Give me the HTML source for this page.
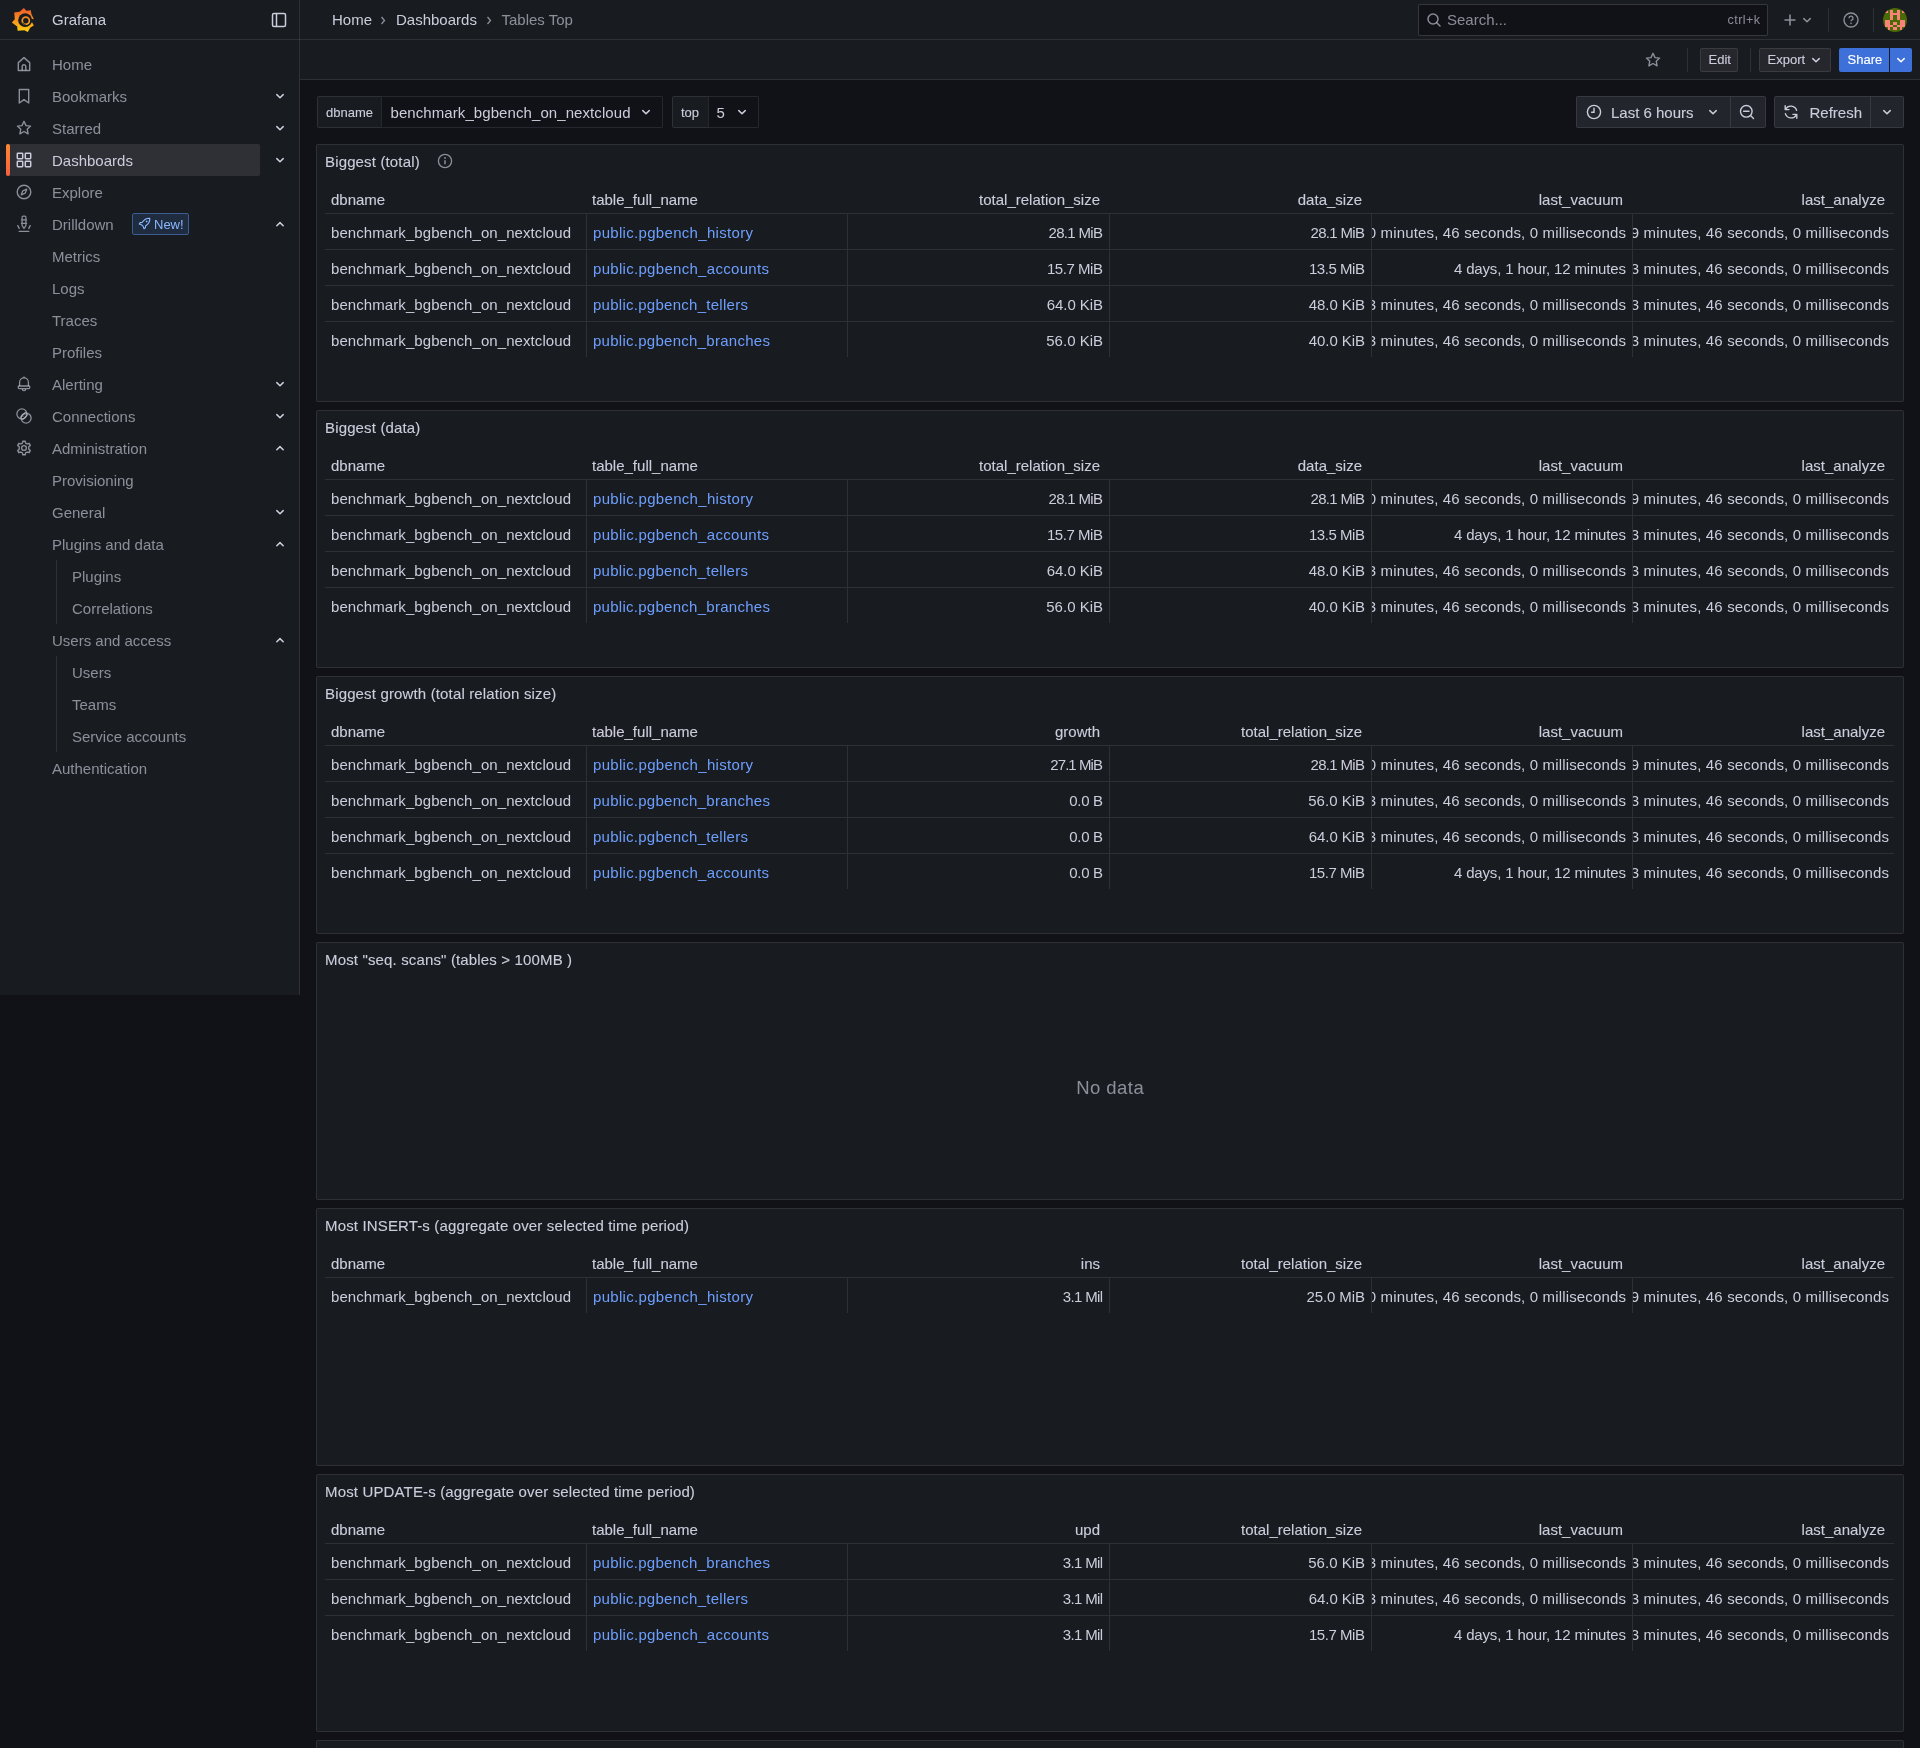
<!DOCTYPE html><html><head><meta charset="utf-8"><style>
*{box-sizing:border-box}
html,body{margin:0;padding:0}
body{will-change:transform;width:1920px;height:1748px;background:#111217;font-family:"Liberation Sans",sans-serif;color:#ccccdc;position:relative;overflow:hidden;font-size:15px}
.a{position:absolute}
.t{position:absolute;white-space:nowrap;line-height:1}
svg.a{overflow:visible}
</style></head><body>

<div class="a" style="left:0px;top:0px;width:1920px;height:40px;background:#181b1f;border-bottom:1px solid rgba(204,204,220,0.12)"></div>
<div class="a" style="left:0px;top:40px;width:300px;height:955px;background:#181b1f"></div>
<div class="a" style="left:299px;top:0px;width:1px;height:995px;background:rgba(204,204,220,0.12)"></div>
<div class="a" style="left:300px;top:40px;width:1620px;height:40px;background:#181b1f;border-bottom:1px solid rgba(204,204,220,0.12)"></div>
<svg class="a" style="left:8px;top:4px" width="32" height="32" viewBox="0 0 32 32">
<defs><linearGradient id="lg" gradientUnits="userSpaceOnUse" x1="0" y1="28" x2="0" y2="4"><stop offset="0" stop-color="#fcd20b"/><stop offset="0.45" stop-color="#f8971c"/><stop offset="1" stop-color="#f05a28"/></linearGradient></defs>
<path fill="url(#lg)" d="M15.9 3.9 L18.3 6.8 L22.8 6.2 L23.4 10 L25.9 15.2 L23.6 17.2 L25.8 21.4 L22.4 23.6 L19.8 27.9 L16.3 26.2 L9.6 26.8 L9.2 22.6 L3.8 18.6 L6.8 15.2 L6.2 8.6 L11.6 7.8 Z"/>
<circle cx="17.1" cy="16.2" r="6.9" fill="#181b1f"/>
<circle cx="17.8" cy="16.7" r="3.55" fill="none" stroke="url(#lg)" stroke-width="1.7"/>
<path d="M14.4 18.6 Q15.5 20.6 17.6 20.4" fill="none" stroke="#181b1f" stroke-width="0.9"/><path d="M22.6 14.6 L26.4 15.6 L25.6 18 L22.8 18.4 Z" fill="#181b1f"/>
</svg>
<div class="t" style="left:52px;top:12.30px;font-size:15px;color:#ccccdc;">Grafana</div>
<svg class="a" style="left:271px;top:12px;" width="16" height="16" viewBox="0 0 16 16"><rect x="1.5" y="1.5" width="13" height="13" rx="1.5" fill="none" stroke="#ccccdc" stroke-width="1.5"/><line x1="5.5" y1="2" x2="5.5" y2="14" stroke="#ccccdc" stroke-width="1.5"/></svg>
<div class="t" style="left:332px;top:12.30px;font-size:15px;color:#ccccdc;">Home</div>
<svg class="a" style="left:380px;top:16px;" width="6" height="9" viewBox="0 0 6 9"><path d="M1.5 1 L4.5 4.5 L1.5 8" fill="none" stroke="rgba(204,204,220,0.65)" stroke-width="1.3"/></svg>
<div class="t" style="left:396px;top:12.30px;font-size:15px;color:#ccccdc;">Dashboards</div>
<svg class="a" style="left:486px;top:16px;" width="6" height="9" viewBox="0 0 6 9"><path d="M1.5 1 L4.5 4.5 L1.5 8" fill="none" stroke="rgba(204,204,220,0.65)" stroke-width="1.3"/></svg>
<div class="t" style="left:501.5px;top:12.30px;font-size:15px;color:rgba(204,204,220,0.65);">Tables Top</div>
<div class="a" style="left:1418px;top:4px;width:350px;height:32px;background:#111217;border:1px solid rgba(204,204,220,0.2);border-radius:2px"></div>
<svg class="a" style="left:1426px;top:12px;" width="16" height="16" viewBox="0 0 16 16"><circle cx="7" cy="7" r="5" fill="none" stroke="rgba(204,204,220,0.65)" stroke-width="1.5"/><line x1="10.8" y1="10.8" x2="14" y2="14" stroke="rgba(204,204,220,0.65)" stroke-width="1.5" stroke-linecap="round"/></svg>
<div class="t" style="left:1447px;top:12.30px;font-size:15px;color:rgba(204,204,220,0.65);">Search...</div>
<div class="t" style="right:160px;top:14.42px;font-size:12.5px;color:rgba(204,204,220,0.65);letter-spacing:0.45px;margin-right:-0.45px;">ctrl+k</div>
<svg class="a" style="left:1784px;top:14px;" width="12" height="12" viewBox="0 0 12 12"><path d="M6 0.5 V11.5 M0.5 6 H11.5" stroke="rgba(204,204,220,0.65)" stroke-width="1.6"/></svg>
<svg class="a" style="left:1802px;top:16.75px;" width="10" height="6.5" viewBox="0 0 10 6.5"><path d="M1.8 1.6 L5 4.8 L8.2 1.6" fill="none" stroke="rgba(204,204,220,0.65)" stroke-width="1.5" stroke-linecap="round" stroke-linejoin="round"/></svg>
<div class="a" style="left:1828px;top:8px;width:1px;height:24px;background:rgba(204,204,220,0.12)"></div>
<svg class="a" style="left:1843px;top:12px;" width="16" height="16" viewBox="0 0 16 16"><circle cx="8" cy="8" r="7" fill="none" stroke="rgba(204,204,220,0.65)" stroke-width="1.4"/><path d="M6 6.2 a2 2 0 1 1 2.6 1.9 c-0.5 0.2 -0.6 0.5 -0.6 1.2" fill="none" stroke="rgba(204,204,220,0.65)" stroke-width="1.3"/><circle cx="8" cy="11.4" r="0.8" fill="rgba(204,204,220,0.65)"/></svg>
<div class="a" style="left:1873px;top:8px;width:1px;height:24px;background:rgba(204,204,220,0.12)"></div>
<svg class="a" style="left:1883px;top:8px" width="24" height="24" viewBox="0 0 24 24"><defs><clipPath id="av"><circle cx="12" cy="12" r="12"/></clipPath></defs>
<g clip-path="url(#av)"><rect width="24" height="24" fill="#4a6a08"/><g fill="#fa8379" shape-rendering="crispEdges"><rect x="2.4" y="2.4" width="2.4" height="2.4"/><rect x="7.2" y="2.4" width="2.4" height="2.4"/><rect x="14.4" y="2.4" width="2.4" height="2.4"/><rect x="19.2" y="2.4" width="2.4" height="2.4"/><rect x="7.2" y="4.8" width="2.4" height="2.4"/><rect x="9.6" y="4.8" width="2.4" height="2.4"/><rect x="12.0" y="4.8" width="2.4" height="2.4"/><rect x="14.4" y="4.8" width="2.4" height="2.4"/><rect x="7.2" y="7.2" width="2.4" height="2.4"/><rect x="14.4" y="7.2" width="2.4" height="2.4"/><rect x="7.2" y="9.6" width="2.4" height="2.4"/><rect x="14.4" y="9.6" width="2.4" height="2.4"/><rect x="2.4" y="12.0" width="2.4" height="2.4"/><rect x="4.8" y="12.0" width="2.4" height="2.4"/><rect x="16.8" y="12.0" width="2.4" height="2.4"/><rect x="19.2" y="12.0" width="2.4" height="2.4"/><rect x="2.4" y="14.4" width="2.4" height="2.4"/><rect x="4.8" y="14.4" width="2.4" height="2.4"/><rect x="9.6" y="14.4" width="2.4" height="2.4"/><rect x="12.0" y="14.4" width="2.4" height="2.4"/><rect x="16.8" y="14.4" width="2.4" height="2.4"/><rect x="19.2" y="14.4" width="2.4" height="2.4"/><rect x="2.4" y="16.8" width="2.4" height="2.4"/><rect x="4.8" y="16.8" width="2.4" height="2.4"/><rect x="7.2" y="16.8" width="2.4" height="2.4"/><rect x="14.4" y="16.8" width="2.4" height="2.4"/><rect x="16.8" y="16.8" width="2.4" height="2.4"/><rect x="19.2" y="16.8" width="2.4" height="2.4"/><rect x="4.8" y="19.2" width="2.4" height="2.4"/><rect x="9.6" y="19.2" width="2.4" height="2.4"/><rect x="12.0" y="19.2" width="2.4" height="2.4"/><rect x="16.8" y="19.2" width="2.4" height="2.4"/></g></g></svg>
<svg class="a" style="left:1645px;top:52px;" width="16" height="16" viewBox="0 0 16 16"><path d="M8 1.3 L10 5.6 L14.6 6.1 L11.2 9.2 L12.1 13.8 L8 11.5 L3.9 13.8 L4.8 9.2 L1.4 6.1 L6 5.6 Z" fill="none" stroke="rgba(204,204,220,0.65)" stroke-width="1.4" stroke-linejoin="round"/></svg>
<div class="a" style="left:1687px;top:48px;width:1px;height:24px;background:rgba(204,204,220,0.12)"></div>
<div class="a" style="left:1700px;top:48px;width:38px;height:24px;background:#25272c;border:1px solid rgba(204,204,220,0.12);border-radius:2px"></div>
<div class="t" style="left:1708.5px;top:52.50px;font-size:13px;color:#ccccdc;-webkit-text-stroke:0.12px currentColor;">Edit</div>
<div class="a" style="left:1750px;top:48px;width:1px;height:24px;background:rgba(204,204,220,0.12)"></div>
<div class="a" style="left:1759px;top:48px;width:72px;height:24px;background:#25272c;border:1px solid rgba(204,204,220,0.12);border-radius:2px"></div>
<div class="t" style="left:1767.5px;top:52.50px;font-size:13px;color:#ccccdc;-webkit-text-stroke:0.12px currentColor;">Export</div>
<svg class="a" style="left:1811px;top:56.75px;" width="10" height="6.5" viewBox="0 0 10 6.5"><path d="M1.8 1.6 L5 4.8 L8.2 1.6" fill="none" stroke="#ccccdc" stroke-width="1.5" stroke-linecap="round" stroke-linejoin="round"/></svg>
<div class="a" style="left:1839px;top:48px;width:50px;height:24px;background:#3d71d9;border-radius:2px 0 0 2px"></div>
<div class="t" style="left:1847.5px;top:52.50px;font-size:13px;color:#ffffff;-webkit-text-stroke:0.12px currentColor;">Share</div>
<div class="a" style="left:1890px;top:48px;width:22px;height:24px;background:#3d71d9;border-radius:0 2px 2px 0"></div>
<svg class="a" style="left:1896px;top:56.75px;" width="10" height="6.5" viewBox="0 0 10 6.5"><path d="M1.8 1.6 L5 4.8 L8.2 1.6" fill="none" stroke="#ffffff" stroke-width="1.5" stroke-linecap="round" stroke-linejoin="round"/></svg>
<div class="a" style="left:317px;top:96px;width:65px;height:32px;background:#181b1f;border:1px solid rgba(204,204,220,0.12);border-radius:2px 0 0 2px"></div>
<div class="t" style="left:326px;top:106.00px;font-size:13px;color:#ccccdc;-webkit-text-stroke:0.12px currentColor;">dbname</div>
<div class="a" style="left:381px;top:96px;width:282px;height:32px;background:#111217;border:1px solid rgba(204,204,220,0.12);border-radius:0 2px 2px 0"></div>
<div class="t" style="left:390.5px;top:104.80px;font-size:15px;color:#ccccdc;letter-spacing:0.08px;">benchmark_bgbench_on_nextcloud</div>
<svg class="a" style="left:641px;top:108.75px;" width="10" height="6.5" viewBox="0 0 10 6.5"><path d="M1.8 1.6 L5 4.8 L8.2 1.6" fill="none" stroke="#ccccdc" stroke-width="1.5" stroke-linecap="round" stroke-linejoin="round"/></svg>
<div class="a" style="left:672px;top:96px;width:37px;height:32px;background:#181b1f;border:1px solid rgba(204,204,220,0.12);border-radius:2px 0 0 2px"></div>
<div class="t" style="left:681px;top:106.00px;font-size:13px;color:#ccccdc;-webkit-text-stroke:0.12px currentColor;">top</div>
<div class="a" style="left:708px;top:96px;width:51px;height:32px;background:#111217;border:1px solid rgba(204,204,220,0.12);border-radius:0 2px 2px 0"></div>
<div class="t" style="left:716.5px;top:104.80px;font-size:15px;color:#ccccdc;">5</div>
<svg class="a" style="left:737px;top:108.75px;" width="10" height="6.5" viewBox="0 0 10 6.5"><path d="M1.8 1.6 L5 4.8 L8.2 1.6" fill="none" stroke="#ccccdc" stroke-width="1.5" stroke-linecap="round" stroke-linejoin="round"/></svg>
<div class="a" style="left:1576px;top:96px;width:155px;height:32px;background:#22252b;border:1px solid rgba(204,204,220,0.12);border-radius:2px 0 0 2px"></div>
<svg class="a" style="left:1586px;top:104px;" width="16" height="16" viewBox="0 0 16 16"><circle cx="8" cy="8" r="6.6" fill="none" stroke="#ccccdc" stroke-width="1.4"/><path d="M8 4.3 V8.2 H5.6" fill="none" stroke="#ccccdc" stroke-width="1.4" stroke-linecap="round"/></svg>
<div class="t" style="left:1611px;top:104.80px;font-size:15px;color:#ccccdc;-webkit-text-stroke:0.12px currentColor;">Last 6 hours</div>
<svg class="a" style="left:1708px;top:108.75px;" width="10" height="6.5" viewBox="0 0 10 6.5"><path d="M1.8 1.6 L5 4.8 L8.2 1.6" fill="none" stroke="#ccccdc" stroke-width="1.5" stroke-linecap="round" stroke-linejoin="round"/></svg>
<div class="a" style="left:1730px;top:96px;width:36px;height:32px;background:#22252b;border:1px solid rgba(204,204,220,0.12);border-radius:0 2px 2px 0"></div>
<svg class="a" style="left:1739px;top:104px;" width="16" height="16" viewBox="0 0 16 16"><circle cx="7.3" cy="7.3" r="5.8" fill="none" stroke="#ccccdc" stroke-width="1.4"/><path d="M4.6 7.3 H10 M11.5 11.5 L14.5 14.5" stroke="#ccccdc" stroke-width="1.4" stroke-linecap="round"/></svg>
<div class="a" style="left:1774px;top:96px;width:97px;height:32px;background:#22252b;border:1px solid rgba(204,204,220,0.12);border-radius:2px 0 0 2px"></div>
<svg class="a" style="left:1783px;top:104px;" width="16" height="16" viewBox="0 0 16 16"><path d="M13.6 6.4 A6 6 0 0 0 2.6 5.2 M2.4 9.6 A6 6 0 0 0 13.4 10.8" fill="none" stroke="#ccccdc" stroke-width="1.4" stroke-linecap="round"/><path d="M2.2 1.8 V5.6 H6 M13.8 14.2 V10.4 H10" fill="none" stroke="#ccccdc" stroke-width="1.4" stroke-linecap="round" stroke-linejoin="round"/></svg>
<div class="t" style="left:1809.5px;top:104.80px;font-size:15px;color:#ccccdc;-webkit-text-stroke:0.12px currentColor;">Refresh</div>
<div class="a" style="left:1870px;top:96px;width:34px;height:32px;background:#22252b;border:1px solid rgba(204,204,220,0.12);border-radius:0 2px 2px 0"></div>
<svg class="a" style="left:1882px;top:108.75px;" width="10" height="6.5" viewBox="0 0 10 6.5"><path d="M1.8 1.6 L5 4.8 L8.2 1.6" fill="none" stroke="#ccccdc" stroke-width="1.5" stroke-linecap="round" stroke-linejoin="round"/></svg>
<div class="a" style="left:6px;top:144px;width:254px;height:32px;background:rgba(204,204,220,0.12);border-radius:2px"></div>
<div class="a" style="left:6px;top:144px;width:4px;height:32px;background:linear-gradient(180deg,#ff8833,#f55f3e);border-radius:2px"></div>
<svg class="a" style="left:16px;top:56px;" width="16" height="16" viewBox="0 0 16 16"><path d="M2.3 14.5 V6.6 L8 1.6 L13.7 6.6 V14.5 Z" fill="none" stroke="rgba(204,204,220,0.65)" stroke-width="1.4" stroke-linejoin="round"/><path d="M6.2 14.5 V10.6 a1.8 1.8 0 0 1 3.6 0 V14.5" fill="none" stroke="rgba(204,204,220,0.65)" stroke-width="1.4"/></svg>
<div class="t" style="left:52px;top:57.30px;font-size:15px;color:rgba(204,204,220,0.65);">Home</div>
<svg class="a" style="left:16px;top:88px;" width="16" height="16" viewBox="0 0 16 16"><path d="M3.3 1.5 H12.7 V15 L8 11.6 L3.3 15 Z" fill="none" stroke="rgba(204,204,220,0.65)" stroke-width="1.4" stroke-linejoin="round"/></svg>
<div class="t" style="left:52px;top:89.30px;font-size:15px;color:rgba(204,204,220,0.65);">Bookmarks</div>
<svg class="a" style="left:275px;top:92.75px;" width="10" height="6.5" viewBox="0 0 10 6.5"><path d="M1.8 1.6 L5 4.8 L8.2 1.6" fill="none" stroke="#ccccdc" stroke-width="1.5" stroke-linecap="round" stroke-linejoin="round"/></svg>
<svg class="a" style="left:16px;top:120px;" width="16" height="16" viewBox="0 0 16 16"><path d="M8 1.3 L10 5.6 L14.6 6.1 L11.2 9.2 L12.1 13.8 L8 11.5 L3.9 13.8 L4.8 9.2 L1.4 6.1 L6 5.6 Z" fill="none" stroke="rgba(204,204,220,0.65)" stroke-width="1.4" stroke-linejoin="round"/></svg>
<div class="t" style="left:52px;top:121.30px;font-size:15px;color:rgba(204,204,220,0.65);">Starred</div>
<svg class="a" style="left:275px;top:124.75px;" width="10" height="6.5" viewBox="0 0 10 6.5"><path d="M1.8 1.6 L5 4.8 L8.2 1.6" fill="none" stroke="#ccccdc" stroke-width="1.5" stroke-linecap="round" stroke-linejoin="round"/></svg>
<svg class="a" style="left:16px;top:152px;" width="16" height="16" viewBox="0 0 16 16"><g fill="none" stroke="#ccccdc" stroke-width="1.5"><rect x="1.3" y="1.3" width="5.4" height="5.4" rx="0.6"/><rect x="9.3" y="1.3" width="5.4" height="5.4" rx="0.6"/><rect x="1.3" y="9.3" width="5.4" height="5.4" rx="0.6"/><rect x="9.3" y="9.3" width="5.4" height="5.4" rx="0.6"/></g></svg>
<div class="t" style="left:52px;top:153.30px;font-size:15px;color:#ccccdc;">Dashboards</div>
<svg class="a" style="left:275px;top:156.75px;" width="10" height="6.5" viewBox="0 0 10 6.5"><path d="M1.8 1.6 L5 4.8 L8.2 1.6" fill="none" stroke="#ccccdc" stroke-width="1.5" stroke-linecap="round" stroke-linejoin="round"/></svg>
<svg class="a" style="left:16px;top:184px;" width="16" height="16" viewBox="0 0 16 16"><circle cx="8" cy="8" r="6.8" fill="none" stroke="rgba(204,204,220,0.65)" stroke-width="1.4"/><path d="M10.8 5.2 L9.2 9.2 L5.2 10.8 L6.8 6.8 Z" fill="none" stroke="rgba(204,204,220,0.65)" stroke-width="1.3" stroke-linejoin="round"/></svg>
<div class="t" style="left:52px;top:185.30px;font-size:15px;color:rgba(204,204,220,0.65);">Explore</div>
<svg class="a" style="left:16px;top:216px;" width="16" height="16" viewBox="0 0 16 16"><path d="M6.1 1.3 Q6.1 0.2 7.2 0.2 H8.8 Q9.9 0.2 9.9 1.3 V3.3 L10.6 3.9 L9.9 4.6 V6.7 L10.6 7.3 L9.9 8 V9.6 L8 12.4 L6.1 9.6 V8 L5.4 7.3 L6.1 6.7 V4.6 L5.4 3.9 L6.1 3.3 Z M6.1 3.9 H9.9 M6.1 7.3 H9.9" fill="none" stroke="rgba(204,204,220,0.65)" stroke-width="1.2" stroke-linejoin="round"/><path d="M1.8 9.6 L3.2 12.4 M14.2 9.6 L12.8 12.4 M3.2 15.4 H12.8" fill="none" stroke="rgba(204,204,220,0.65)" stroke-width="1.3" stroke-linecap="round"/></svg>
<div class="t" style="left:52px;top:217.30px;font-size:15px;color:rgba(204,204,220,0.65);">Drilldown</div>
<svg class="a" style="left:275px;top:220.75px;" width="10" height="6.5" viewBox="0 0 10 6.5"><path d="M1.8 4.8 L5 1.6 L8.2 4.8" fill="none" stroke="#ccccdc" stroke-width="1.5" stroke-linecap="round" stroke-linejoin="round"/></svg>
<div class="t" style="left:52px;top:249.30px;font-size:15px;color:rgba(204,204,220,0.65);">Metrics</div>
<div class="t" style="left:52px;top:281.30px;font-size:15px;color:rgba(204,204,220,0.65);">Logs</div>
<div class="t" style="left:52px;top:313.30px;font-size:15px;color:rgba(204,204,220,0.65);">Traces</div>
<div class="t" style="left:52px;top:345.30px;font-size:15px;color:rgba(204,204,220,0.65);">Profiles</div>
<svg class="a" style="left:16px;top:376px;" width="16" height="16" viewBox="0 0 16 16"><path d="M3.6 10 V6.2 a4.4 4.4 0 0 1 8.8 0 V10" fill="none" stroke="rgba(204,204,220,0.65)" stroke-width="1.3"/><rect x="2.3" y="10" width="11.4" height="2.6" rx="0.8" fill="none" stroke="rgba(204,204,220,0.65)" stroke-width="1.3"/><path d="M6.3 13 a1.7 1.7 0 0 0 3.4 0" fill="none" stroke="rgba(204,204,220,0.65)" stroke-width="1.3"/><path d="M8 0.6 V1.8" stroke="rgba(204,204,220,0.65)" stroke-width="1.3"/></svg>
<div class="t" style="left:52px;top:377.30px;font-size:15px;color:rgba(204,204,220,0.65);">Alerting</div>
<svg class="a" style="left:275px;top:380.75px;" width="10" height="6.5" viewBox="0 0 10 6.5"><path d="M1.8 1.6 L5 4.8 L8.2 1.6" fill="none" stroke="#ccccdc" stroke-width="1.5" stroke-linecap="round" stroke-linejoin="round"/></svg>
<svg class="a" style="left:16px;top:408px;" width="16" height="16" viewBox="0 0 16 16"><circle cx="5.9" cy="5.9" r="5" fill="none" stroke="rgba(204,204,220,0.65)" stroke-width="1.3"/><circle cx="10.1" cy="10.1" r="5" fill="none" stroke="rgba(204,204,220,0.65)" stroke-width="1.3"/><path d="M4.2 9.6 L9.6 4.2 M6.4 11.8 L11.8 6.4" stroke="rgba(204,204,220,0.65)" stroke-width="1.2"/><path d="M6.6 8.8 L7.6 7.8 M8.6 7 L9.4 6.2" stroke="rgba(204,204,220,0.65)" stroke-width="1"/></svg>
<div class="t" style="left:52px;top:409.30px;font-size:15px;color:rgba(204,204,220,0.65);">Connections</div>
<svg class="a" style="left:275px;top:412.75px;" width="10" height="6.5" viewBox="0 0 10 6.5"><path d="M1.8 1.6 L5 4.8 L8.2 1.6" fill="none" stroke="#ccccdc" stroke-width="1.5" stroke-linecap="round" stroke-linejoin="round"/></svg>
<svg class="a" style="left:16px;top:440px;" width="16" height="16" viewBox="0 0 16 16"><circle cx="8" cy="8" r="2.4" fill="none" stroke="rgba(204,204,220,0.65)" stroke-width="1.4"/><path d="M6.8 1.2 H9.2 L9.6 3.1 L11.3 4 L13.1 3.3 L14.3 5.4 L12.8 6.7 V9.3 L14.3 10.6 L13.1 12.7 L11.3 12 L9.6 12.9 L9.2 14.8 H6.8 L6.4 12.9 L4.7 12 L2.9 12.7 L1.7 10.6 L3.2 9.3 V6.7 L1.7 5.4 L2.9 3.3 L4.7 4 L6.4 3.1 Z" fill="none" stroke="rgba(204,204,220,0.65)" stroke-width="1.4" stroke-linejoin="round"/></svg>
<div class="t" style="left:52px;top:441.30px;font-size:15px;color:rgba(204,204,220,0.65);">Administration</div>
<svg class="a" style="left:275px;top:444.75px;" width="10" height="6.5" viewBox="0 0 10 6.5"><path d="M1.8 4.8 L5 1.6 L8.2 4.8" fill="none" stroke="#ccccdc" stroke-width="1.5" stroke-linecap="round" stroke-linejoin="round"/></svg>
<div class="t" style="left:52px;top:473.30px;font-size:15px;color:rgba(204,204,220,0.65);">Provisioning</div>
<div class="t" style="left:52px;top:505.30px;font-size:15px;color:rgba(204,204,220,0.65);">General</div>
<svg class="a" style="left:275px;top:508.75px;" width="10" height="6.5" viewBox="0 0 10 6.5"><path d="M1.8 1.6 L5 4.8 L8.2 1.6" fill="none" stroke="#ccccdc" stroke-width="1.5" stroke-linecap="round" stroke-linejoin="round"/></svg>
<div class="t" style="left:52px;top:537.30px;font-size:15px;color:rgba(204,204,220,0.65);">Plugins and data</div>
<svg class="a" style="left:275px;top:540.75px;" width="10" height="6.5" viewBox="0 0 10 6.5"><path d="M1.8 4.8 L5 1.6 L8.2 4.8" fill="none" stroke="#ccccdc" stroke-width="1.5" stroke-linecap="round" stroke-linejoin="round"/></svg>
<div class="t" style="left:72px;top:569.30px;font-size:15px;color:rgba(204,204,220,0.65);">Plugins</div>
<div class="t" style="left:72px;top:601.30px;font-size:15px;color:rgba(204,204,220,0.65);">Correlations</div>
<div class="t" style="left:52px;top:633.30px;font-size:15px;color:rgba(204,204,220,0.65);">Users and access</div>
<svg class="a" style="left:275px;top:636.75px;" width="10" height="6.5" viewBox="0 0 10 6.5"><path d="M1.8 4.8 L5 1.6 L8.2 4.8" fill="none" stroke="#ccccdc" stroke-width="1.5" stroke-linecap="round" stroke-linejoin="round"/></svg>
<div class="t" style="left:72px;top:665.30px;font-size:15px;color:rgba(204,204,220,0.65);">Users</div>
<div class="t" style="left:72px;top:697.30px;font-size:15px;color:rgba(204,204,220,0.65);">Teams</div>
<div class="t" style="left:72px;top:729.30px;font-size:15px;color:rgba(204,204,220,0.65);">Service accounts</div>
<div class="t" style="left:52px;top:761.30px;font-size:15px;color:rgba(204,204,220,0.65);">Authentication</div>
<div class="a" style="left:132px;top:213px;width:57px;height:22px;background:#1f2b3e;border:1px solid #3b5b93;border-radius:2px"></div>
<svg class="a" style="left:138px;top:217px;" width="13" height="13" viewBox="0 0 13 13"><path d="M11.8 1.2 C8.5 1 6 2.6 4.2 5.4 L2.2 5.6 L1.2 7 L3.6 7.8 L5.2 9.4 L6 11.8 L7.4 10.8 L7.6 8.8 C10.4 7 12 4.5 11.8 1.2 Z" fill="none" stroke="#8ab8ff" stroke-width="1.1" stroke-linejoin="round"/><circle cx="8.6" cy="4.4" r="0.9" fill="#8ab8ff"/></svg>
<div class="t" style="left:154px;top:218.00px;font-size:13px;color:#8ab8ff;">New!</div>
<div class="a" style="left:56px;top:560px;width:1px;height:64px;background:rgba(204,204,220,0.12)"></div>
<div class="a" style="left:56px;top:656px;width:1px;height:96px;background:rgba(204,204,220,0.12)"></div>
<div class="a" style="left:316px;top:144px;width:1588px;height:258px;background:#181b1f;border:1px solid rgba(204,204,220,0.12);border-radius:2px"></div>
<div class="t" style="left:325px;top:154.30px;font-size:15px;color:#ccccdc;letter-spacing:0.15px;-webkit-text-stroke:0.12px currentColor;">Biggest (total)</div>
<svg class="a" style="left:437px;top:153px;" width="16" height="16" viewBox="0 0 16 16"><circle cx="8" cy="8" r="6.6" fill="none" stroke="rgba(204,204,220,0.65)" stroke-width="1.3"/><path d="M8 7.3 V11.2" stroke="rgba(204,204,220,0.65)" stroke-width="1.5"/><circle cx="8" cy="5" r="0.9" fill="rgba(204,204,220,0.65)"/></svg>
<div class="t" style="left:331px;top:192.30px;font-size:15px;color:#ccccdc;-webkit-text-stroke:0.12px currentColor;">dbname</div>
<div class="t" style="left:592px;top:192.30px;font-size:15px;color:#ccccdc;-webkit-text-stroke:0.12px currentColor;">table_full_name</div>
<div class="t" style="right:820px;top:192.30px;font-size:15px;color:#ccccdc;-webkit-text-stroke:0.12px currentColor;">total_relation_size</div>
<div class="t" style="right:558px;top:192.30px;font-size:15px;color:#ccccdc;-webkit-text-stroke:0.12px currentColor;">data_size</div>
<div class="t" style="right:297px;top:192.30px;font-size:15px;color:#ccccdc;-webkit-text-stroke:0.12px currentColor;">last_vacuum</div>
<div class="t" style="right:35px;top:192.30px;font-size:15px;color:#ccccdc;-webkit-text-stroke:0.12px currentColor;">last_analyze</div>
<div class="a" style="left:325px;top:213px;width:1569px;height:1px;background:rgba(204,204,220,0.12)"></div>
<div class="a" style="left:325px;top:249px;width:1569px;height:1px;background:rgba(204,204,220,0.12)"></div>
<div class="a" style="left:325px;top:214px;width:261px;height:35px;overflow:hidden;display:flex;justify-content:flex-start;padding:0 6px 0 6px"><span class="t" style="position:relative;flex:none;top:11.30px;height:15px;font-size:15px;color:#ccccdc;letter-spacing:0.08px;">benchmark_bgbench_on_nextcloud</span></div>
<div class="a" style="left:586px;top:214px;width:1px;height:35px;background:rgba(204,204,220,0.12)"></div>
<div class="a" style="left:587px;top:214px;width:260px;height:35px;overflow:hidden;display:flex;justify-content:flex-start;padding:0 6px 0 6px"><span class="t" style="position:relative;flex:none;top:11.30px;height:15px;font-size:15px;color:#6e9fff;letter-spacing:0.31px;">public.pgbench_history</span></div>
<div class="a" style="left:847px;top:214px;width:1px;height:35px;background:rgba(204,204,220,0.12)"></div>
<div class="a" style="left:848px;top:214px;width:261px;height:35px;overflow:hidden;display:flex;justify-content:flex-end;padding:0 6px 0 6px"><span class="t" style="position:relative;flex:none;top:11.30px;height:15px;font-size:15px;color:#ccccdc;letter-spacing:-0.67px;margin-right:0.67px;">28.1 MiB</span></div>
<div class="a" style="left:1109px;top:214px;width:1px;height:35px;background:rgba(204,204,220,0.12)"></div>
<div class="a" style="left:1110px;top:214px;width:261px;height:35px;overflow:hidden;display:flex;justify-content:flex-end;padding:0 6px 0 6px"><span class="t" style="position:relative;flex:none;top:11.30px;height:15px;font-size:15px;color:#ccccdc;letter-spacing:-0.67px;margin-right:0.67px;">28.1 MiB</span></div>
<div class="a" style="left:1371px;top:214px;width:1px;height:35px;background:rgba(204,204,220,0.12)"></div>
<div class="a" style="left:1372px;top:214px;width:260px;height:35px;overflow:hidden;display:flex;justify-content:flex-end;padding:0 6px 0 6px"><span class="t" style="position:relative;flex:none;top:11.30px;height:15px;font-size:15px;color:#ccccdc;letter-spacing:0.156px;margin-right:-0.16px;">0 minutes, 46 seconds, 0 milliseconds</span></div>
<div class="a" style="left:1632px;top:214px;width:1px;height:35px;background:rgba(204,204,220,0.12)"></div>
<div class="a" style="left:1633px;top:214px;width:261px;height:35px;overflow:hidden;display:flex;justify-content:flex-end;padding:0 5px 0 6px"><span class="t" style="position:relative;flex:none;top:11.30px;height:15px;font-size:15px;color:#ccccdc;letter-spacing:0.156px;margin-right:-0.16px;">9 minutes, 46 seconds, 0 milliseconds</span></div>
<div class="a" style="left:325px;top:285px;width:1569px;height:1px;background:rgba(204,204,220,0.12)"></div>
<div class="a" style="left:325px;top:250px;width:261px;height:35px;overflow:hidden;display:flex;justify-content:flex-start;padding:0 6px 0 6px"><span class="t" style="position:relative;flex:none;top:11.30px;height:15px;font-size:15px;color:#ccccdc;letter-spacing:0.08px;">benchmark_bgbench_on_nextcloud</span></div>
<div class="a" style="left:586px;top:250px;width:1px;height:35px;background:rgba(204,204,220,0.12)"></div>
<div class="a" style="left:587px;top:250px;width:260px;height:35px;overflow:hidden;display:flex;justify-content:flex-start;padding:0 6px 0 6px"><span class="t" style="position:relative;flex:none;top:11.30px;height:15px;font-size:15px;color:#6e9fff;letter-spacing:0.3px;">public.pgbench_accounts</span></div>
<div class="a" style="left:847px;top:250px;width:1px;height:35px;background:rgba(204,204,220,0.12)"></div>
<div class="a" style="left:848px;top:250px;width:261px;height:35px;overflow:hidden;display:flex;justify-content:flex-end;padding:0 6px 0 6px"><span class="t" style="position:relative;flex:none;top:11.30px;height:15px;font-size:15px;color:#ccccdc;letter-spacing:-0.44px;margin-right:0.44px;">15.7 MiB</span></div>
<div class="a" style="left:1109px;top:250px;width:1px;height:35px;background:rgba(204,204,220,0.12)"></div>
<div class="a" style="left:1110px;top:250px;width:261px;height:35px;overflow:hidden;display:flex;justify-content:flex-end;padding:0 6px 0 6px"><span class="t" style="position:relative;flex:none;top:11.30px;height:15px;font-size:15px;color:#ccccdc;letter-spacing:-0.44px;margin-right:0.44px;">13.5 MiB</span></div>
<div class="a" style="left:1371px;top:250px;width:1px;height:35px;background:rgba(204,204,220,0.12)"></div>
<div class="a" style="left:1372px;top:250px;width:260px;height:35px;overflow:hidden;display:flex;justify-content:flex-end;padding:0 6px 0 6px"><span class="t" style="position:relative;flex:none;top:11.30px;height:15px;font-size:15px;color:#ccccdc;letter-spacing:-0.156px;margin-right:0.16px;">4 days, 1 hour, 12 minutes</span></div>
<div class="a" style="left:1632px;top:250px;width:1px;height:35px;background:rgba(204,204,220,0.12)"></div>
<div class="a" style="left:1633px;top:250px;width:261px;height:35px;overflow:hidden;display:flex;justify-content:flex-end;padding:0 5px 0 6px"><span class="t" style="position:relative;flex:none;top:11.30px;height:15px;font-size:15px;color:#ccccdc;letter-spacing:0.156px;margin-right:-0.16px;">3 minutes, 46 seconds, 0 milliseconds</span></div>
<div class="a" style="left:325px;top:321px;width:1569px;height:1px;background:rgba(204,204,220,0.12)"></div>
<div class="a" style="left:325px;top:286px;width:261px;height:35px;overflow:hidden;display:flex;justify-content:flex-start;padding:0 6px 0 6px"><span class="t" style="position:relative;flex:none;top:11.30px;height:15px;font-size:15px;color:#ccccdc;letter-spacing:0.08px;">benchmark_bgbench_on_nextcloud</span></div>
<div class="a" style="left:586px;top:286px;width:1px;height:35px;background:rgba(204,204,220,0.12)"></div>
<div class="a" style="left:587px;top:286px;width:260px;height:35px;overflow:hidden;display:flex;justify-content:flex-start;padding:0 6px 0 6px"><span class="t" style="position:relative;flex:none;top:11.30px;height:15px;font-size:15px;color:#6e9fff;letter-spacing:0.27px;">public.pgbench_tellers</span></div>
<div class="a" style="left:847px;top:286px;width:1px;height:35px;background:rgba(204,204,220,0.12)"></div>
<div class="a" style="left:848px;top:286px;width:261px;height:35px;overflow:hidden;display:flex;justify-content:flex-end;padding:0 6px 0 6px"><span class="t" style="position:relative;flex:none;top:11.30px;height:15px;font-size:15px;color:#ccccdc;letter-spacing:-0.06px;margin-right:0.06px;">64.0 KiB</span></div>
<div class="a" style="left:1109px;top:286px;width:1px;height:35px;background:rgba(204,204,220,0.12)"></div>
<div class="a" style="left:1110px;top:286px;width:261px;height:35px;overflow:hidden;display:flex;justify-content:flex-end;padding:0 6px 0 6px"><span class="t" style="position:relative;flex:none;top:11.30px;height:15px;font-size:15px;color:#ccccdc;letter-spacing:-0.06px;margin-right:0.06px;">48.0 KiB</span></div>
<div class="a" style="left:1371px;top:286px;width:1px;height:35px;background:rgba(204,204,220,0.12)"></div>
<div class="a" style="left:1372px;top:286px;width:260px;height:35px;overflow:hidden;display:flex;justify-content:flex-end;padding:0 6px 0 6px"><span class="t" style="position:relative;flex:none;top:11.30px;height:15px;font-size:15px;color:#ccccdc;letter-spacing:0.156px;margin-right:-0.16px;">3 minutes, 46 seconds, 0 milliseconds</span></div>
<div class="a" style="left:1632px;top:286px;width:1px;height:35px;background:rgba(204,204,220,0.12)"></div>
<div class="a" style="left:1633px;top:286px;width:261px;height:35px;overflow:hidden;display:flex;justify-content:flex-end;padding:0 5px 0 6px"><span class="t" style="position:relative;flex:none;top:11.30px;height:15px;font-size:15px;color:#ccccdc;letter-spacing:0.156px;margin-right:-0.16px;">3 minutes, 46 seconds, 0 milliseconds</span></div>
<div class="a" style="left:325px;top:322px;width:261px;height:35px;overflow:hidden;display:flex;justify-content:flex-start;padding:0 6px 0 6px"><span class="t" style="position:relative;flex:none;top:11.30px;height:15px;font-size:15px;color:#ccccdc;letter-spacing:0.08px;">benchmark_bgbench_on_nextcloud</span></div>
<div class="a" style="left:586px;top:322px;width:1px;height:35px;background:rgba(204,204,220,0.12)"></div>
<div class="a" style="left:587px;top:322px;width:260px;height:35px;overflow:hidden;display:flex;justify-content:flex-start;padding:0 6px 0 6px"><span class="t" style="position:relative;flex:none;top:11.30px;height:15px;font-size:15px;color:#6e9fff;letter-spacing:0.27px;">public.pgbench_branches</span></div>
<div class="a" style="left:847px;top:322px;width:1px;height:35px;background:rgba(204,204,220,0.12)"></div>
<div class="a" style="left:848px;top:322px;width:261px;height:35px;overflow:hidden;display:flex;justify-content:flex-end;padding:0 6px 0 6px"><span class="t" style="position:relative;flex:none;top:11.30px;height:15px;font-size:15px;color:#ccccdc;">56.0 KiB</span></div>
<div class="a" style="left:1109px;top:322px;width:1px;height:35px;background:rgba(204,204,220,0.12)"></div>
<div class="a" style="left:1110px;top:322px;width:261px;height:35px;overflow:hidden;display:flex;justify-content:flex-end;padding:0 6px 0 6px"><span class="t" style="position:relative;flex:none;top:11.30px;height:15px;font-size:15px;color:#ccccdc;letter-spacing:-0.06px;margin-right:0.06px;">40.0 KiB</span></div>
<div class="a" style="left:1371px;top:322px;width:1px;height:35px;background:rgba(204,204,220,0.12)"></div>
<div class="a" style="left:1372px;top:322px;width:260px;height:35px;overflow:hidden;display:flex;justify-content:flex-end;padding:0 6px 0 6px"><span class="t" style="position:relative;flex:none;top:11.30px;height:15px;font-size:15px;color:#ccccdc;letter-spacing:0.156px;margin-right:-0.16px;">3 minutes, 46 seconds, 0 milliseconds</span></div>
<div class="a" style="left:1632px;top:322px;width:1px;height:35px;background:rgba(204,204,220,0.12)"></div>
<div class="a" style="left:1633px;top:322px;width:261px;height:35px;overflow:hidden;display:flex;justify-content:flex-end;padding:0 5px 0 6px"><span class="t" style="position:relative;flex:none;top:11.30px;height:15px;font-size:15px;color:#ccccdc;letter-spacing:0.156px;margin-right:-0.16px;">3 minutes, 46 seconds, 0 milliseconds</span></div>
<div class="a" style="left:316px;top:410px;width:1588px;height:258px;background:#181b1f;border:1px solid rgba(204,204,220,0.12);border-radius:2px"></div>
<div class="t" style="left:325px;top:420.30px;font-size:15px;color:#ccccdc;letter-spacing:0.15px;-webkit-text-stroke:0.12px currentColor;">Biggest (data)</div>
<div class="t" style="left:331px;top:458.30px;font-size:15px;color:#ccccdc;-webkit-text-stroke:0.12px currentColor;">dbname</div>
<div class="t" style="left:592px;top:458.30px;font-size:15px;color:#ccccdc;-webkit-text-stroke:0.12px currentColor;">table_full_name</div>
<div class="t" style="right:820px;top:458.30px;font-size:15px;color:#ccccdc;-webkit-text-stroke:0.12px currentColor;">total_relation_size</div>
<div class="t" style="right:558px;top:458.30px;font-size:15px;color:#ccccdc;-webkit-text-stroke:0.12px currentColor;">data_size</div>
<div class="t" style="right:297px;top:458.30px;font-size:15px;color:#ccccdc;-webkit-text-stroke:0.12px currentColor;">last_vacuum</div>
<div class="t" style="right:35px;top:458.30px;font-size:15px;color:#ccccdc;-webkit-text-stroke:0.12px currentColor;">last_analyze</div>
<div class="a" style="left:325px;top:479px;width:1569px;height:1px;background:rgba(204,204,220,0.12)"></div>
<div class="a" style="left:325px;top:515px;width:1569px;height:1px;background:rgba(204,204,220,0.12)"></div>
<div class="a" style="left:325px;top:480px;width:261px;height:35px;overflow:hidden;display:flex;justify-content:flex-start;padding:0 6px 0 6px"><span class="t" style="position:relative;flex:none;top:11.30px;height:15px;font-size:15px;color:#ccccdc;letter-spacing:0.08px;">benchmark_bgbench_on_nextcloud</span></div>
<div class="a" style="left:586px;top:480px;width:1px;height:35px;background:rgba(204,204,220,0.12)"></div>
<div class="a" style="left:587px;top:480px;width:260px;height:35px;overflow:hidden;display:flex;justify-content:flex-start;padding:0 6px 0 6px"><span class="t" style="position:relative;flex:none;top:11.30px;height:15px;font-size:15px;color:#6e9fff;letter-spacing:0.31px;">public.pgbench_history</span></div>
<div class="a" style="left:847px;top:480px;width:1px;height:35px;background:rgba(204,204,220,0.12)"></div>
<div class="a" style="left:848px;top:480px;width:261px;height:35px;overflow:hidden;display:flex;justify-content:flex-end;padding:0 6px 0 6px"><span class="t" style="position:relative;flex:none;top:11.30px;height:15px;font-size:15px;color:#ccccdc;letter-spacing:-0.67px;margin-right:0.67px;">28.1 MiB</span></div>
<div class="a" style="left:1109px;top:480px;width:1px;height:35px;background:rgba(204,204,220,0.12)"></div>
<div class="a" style="left:1110px;top:480px;width:261px;height:35px;overflow:hidden;display:flex;justify-content:flex-end;padding:0 6px 0 6px"><span class="t" style="position:relative;flex:none;top:11.30px;height:15px;font-size:15px;color:#ccccdc;letter-spacing:-0.67px;margin-right:0.67px;">28.1 MiB</span></div>
<div class="a" style="left:1371px;top:480px;width:1px;height:35px;background:rgba(204,204,220,0.12)"></div>
<div class="a" style="left:1372px;top:480px;width:260px;height:35px;overflow:hidden;display:flex;justify-content:flex-end;padding:0 6px 0 6px"><span class="t" style="position:relative;flex:none;top:11.30px;height:15px;font-size:15px;color:#ccccdc;letter-spacing:0.156px;margin-right:-0.16px;">0 minutes, 46 seconds, 0 milliseconds</span></div>
<div class="a" style="left:1632px;top:480px;width:1px;height:35px;background:rgba(204,204,220,0.12)"></div>
<div class="a" style="left:1633px;top:480px;width:261px;height:35px;overflow:hidden;display:flex;justify-content:flex-end;padding:0 5px 0 6px"><span class="t" style="position:relative;flex:none;top:11.30px;height:15px;font-size:15px;color:#ccccdc;letter-spacing:0.156px;margin-right:-0.16px;">9 minutes, 46 seconds, 0 milliseconds</span></div>
<div class="a" style="left:325px;top:551px;width:1569px;height:1px;background:rgba(204,204,220,0.12)"></div>
<div class="a" style="left:325px;top:516px;width:261px;height:35px;overflow:hidden;display:flex;justify-content:flex-start;padding:0 6px 0 6px"><span class="t" style="position:relative;flex:none;top:11.30px;height:15px;font-size:15px;color:#ccccdc;letter-spacing:0.08px;">benchmark_bgbench_on_nextcloud</span></div>
<div class="a" style="left:586px;top:516px;width:1px;height:35px;background:rgba(204,204,220,0.12)"></div>
<div class="a" style="left:587px;top:516px;width:260px;height:35px;overflow:hidden;display:flex;justify-content:flex-start;padding:0 6px 0 6px"><span class="t" style="position:relative;flex:none;top:11.30px;height:15px;font-size:15px;color:#6e9fff;letter-spacing:0.3px;">public.pgbench_accounts</span></div>
<div class="a" style="left:847px;top:516px;width:1px;height:35px;background:rgba(204,204,220,0.12)"></div>
<div class="a" style="left:848px;top:516px;width:261px;height:35px;overflow:hidden;display:flex;justify-content:flex-end;padding:0 6px 0 6px"><span class="t" style="position:relative;flex:none;top:11.30px;height:15px;font-size:15px;color:#ccccdc;letter-spacing:-0.44px;margin-right:0.44px;">15.7 MiB</span></div>
<div class="a" style="left:1109px;top:516px;width:1px;height:35px;background:rgba(204,204,220,0.12)"></div>
<div class="a" style="left:1110px;top:516px;width:261px;height:35px;overflow:hidden;display:flex;justify-content:flex-end;padding:0 6px 0 6px"><span class="t" style="position:relative;flex:none;top:11.30px;height:15px;font-size:15px;color:#ccccdc;letter-spacing:-0.44px;margin-right:0.44px;">13.5 MiB</span></div>
<div class="a" style="left:1371px;top:516px;width:1px;height:35px;background:rgba(204,204,220,0.12)"></div>
<div class="a" style="left:1372px;top:516px;width:260px;height:35px;overflow:hidden;display:flex;justify-content:flex-end;padding:0 6px 0 6px"><span class="t" style="position:relative;flex:none;top:11.30px;height:15px;font-size:15px;color:#ccccdc;letter-spacing:-0.156px;margin-right:0.16px;">4 days, 1 hour, 12 minutes</span></div>
<div class="a" style="left:1632px;top:516px;width:1px;height:35px;background:rgba(204,204,220,0.12)"></div>
<div class="a" style="left:1633px;top:516px;width:261px;height:35px;overflow:hidden;display:flex;justify-content:flex-end;padding:0 5px 0 6px"><span class="t" style="position:relative;flex:none;top:11.30px;height:15px;font-size:15px;color:#ccccdc;letter-spacing:0.156px;margin-right:-0.16px;">3 minutes, 46 seconds, 0 milliseconds</span></div>
<div class="a" style="left:325px;top:587px;width:1569px;height:1px;background:rgba(204,204,220,0.12)"></div>
<div class="a" style="left:325px;top:552px;width:261px;height:35px;overflow:hidden;display:flex;justify-content:flex-start;padding:0 6px 0 6px"><span class="t" style="position:relative;flex:none;top:11.30px;height:15px;font-size:15px;color:#ccccdc;letter-spacing:0.08px;">benchmark_bgbench_on_nextcloud</span></div>
<div class="a" style="left:586px;top:552px;width:1px;height:35px;background:rgba(204,204,220,0.12)"></div>
<div class="a" style="left:587px;top:552px;width:260px;height:35px;overflow:hidden;display:flex;justify-content:flex-start;padding:0 6px 0 6px"><span class="t" style="position:relative;flex:none;top:11.30px;height:15px;font-size:15px;color:#6e9fff;letter-spacing:0.27px;">public.pgbench_tellers</span></div>
<div class="a" style="left:847px;top:552px;width:1px;height:35px;background:rgba(204,204,220,0.12)"></div>
<div class="a" style="left:848px;top:552px;width:261px;height:35px;overflow:hidden;display:flex;justify-content:flex-end;padding:0 6px 0 6px"><span class="t" style="position:relative;flex:none;top:11.30px;height:15px;font-size:15px;color:#ccccdc;letter-spacing:-0.06px;margin-right:0.06px;">64.0 KiB</span></div>
<div class="a" style="left:1109px;top:552px;width:1px;height:35px;background:rgba(204,204,220,0.12)"></div>
<div class="a" style="left:1110px;top:552px;width:261px;height:35px;overflow:hidden;display:flex;justify-content:flex-end;padding:0 6px 0 6px"><span class="t" style="position:relative;flex:none;top:11.30px;height:15px;font-size:15px;color:#ccccdc;letter-spacing:-0.06px;margin-right:0.06px;">48.0 KiB</span></div>
<div class="a" style="left:1371px;top:552px;width:1px;height:35px;background:rgba(204,204,220,0.12)"></div>
<div class="a" style="left:1372px;top:552px;width:260px;height:35px;overflow:hidden;display:flex;justify-content:flex-end;padding:0 6px 0 6px"><span class="t" style="position:relative;flex:none;top:11.30px;height:15px;font-size:15px;color:#ccccdc;letter-spacing:0.156px;margin-right:-0.16px;">3 minutes, 46 seconds, 0 milliseconds</span></div>
<div class="a" style="left:1632px;top:552px;width:1px;height:35px;background:rgba(204,204,220,0.12)"></div>
<div class="a" style="left:1633px;top:552px;width:261px;height:35px;overflow:hidden;display:flex;justify-content:flex-end;padding:0 5px 0 6px"><span class="t" style="position:relative;flex:none;top:11.30px;height:15px;font-size:15px;color:#ccccdc;letter-spacing:0.156px;margin-right:-0.16px;">3 minutes, 46 seconds, 0 milliseconds</span></div>
<div class="a" style="left:325px;top:588px;width:261px;height:35px;overflow:hidden;display:flex;justify-content:flex-start;padding:0 6px 0 6px"><span class="t" style="position:relative;flex:none;top:11.30px;height:15px;font-size:15px;color:#ccccdc;letter-spacing:0.08px;">benchmark_bgbench_on_nextcloud</span></div>
<div class="a" style="left:586px;top:588px;width:1px;height:35px;background:rgba(204,204,220,0.12)"></div>
<div class="a" style="left:587px;top:588px;width:260px;height:35px;overflow:hidden;display:flex;justify-content:flex-start;padding:0 6px 0 6px"><span class="t" style="position:relative;flex:none;top:11.30px;height:15px;font-size:15px;color:#6e9fff;letter-spacing:0.27px;">public.pgbench_branches</span></div>
<div class="a" style="left:847px;top:588px;width:1px;height:35px;background:rgba(204,204,220,0.12)"></div>
<div class="a" style="left:848px;top:588px;width:261px;height:35px;overflow:hidden;display:flex;justify-content:flex-end;padding:0 6px 0 6px"><span class="t" style="position:relative;flex:none;top:11.30px;height:15px;font-size:15px;color:#ccccdc;">56.0 KiB</span></div>
<div class="a" style="left:1109px;top:588px;width:1px;height:35px;background:rgba(204,204,220,0.12)"></div>
<div class="a" style="left:1110px;top:588px;width:261px;height:35px;overflow:hidden;display:flex;justify-content:flex-end;padding:0 6px 0 6px"><span class="t" style="position:relative;flex:none;top:11.30px;height:15px;font-size:15px;color:#ccccdc;letter-spacing:-0.06px;margin-right:0.06px;">40.0 KiB</span></div>
<div class="a" style="left:1371px;top:588px;width:1px;height:35px;background:rgba(204,204,220,0.12)"></div>
<div class="a" style="left:1372px;top:588px;width:260px;height:35px;overflow:hidden;display:flex;justify-content:flex-end;padding:0 6px 0 6px"><span class="t" style="position:relative;flex:none;top:11.30px;height:15px;font-size:15px;color:#ccccdc;letter-spacing:0.156px;margin-right:-0.16px;">3 minutes, 46 seconds, 0 milliseconds</span></div>
<div class="a" style="left:1632px;top:588px;width:1px;height:35px;background:rgba(204,204,220,0.12)"></div>
<div class="a" style="left:1633px;top:588px;width:261px;height:35px;overflow:hidden;display:flex;justify-content:flex-end;padding:0 5px 0 6px"><span class="t" style="position:relative;flex:none;top:11.30px;height:15px;font-size:15px;color:#ccccdc;letter-spacing:0.156px;margin-right:-0.16px;">3 minutes, 46 seconds, 0 milliseconds</span></div>
<div class="a" style="left:316px;top:676px;width:1588px;height:258px;background:#181b1f;border:1px solid rgba(204,204,220,0.12);border-radius:2px"></div>
<div class="t" style="left:325px;top:686.30px;font-size:15px;color:#ccccdc;letter-spacing:0.15px;-webkit-text-stroke:0.12px currentColor;">Biggest growth (total relation size)</div>
<div class="t" style="left:331px;top:724.30px;font-size:15px;color:#ccccdc;-webkit-text-stroke:0.12px currentColor;">dbname</div>
<div class="t" style="left:592px;top:724.30px;font-size:15px;color:#ccccdc;-webkit-text-stroke:0.12px currentColor;">table_full_name</div>
<div class="t" style="right:820px;top:724.30px;font-size:15px;color:#ccccdc;-webkit-text-stroke:0.12px currentColor;">growth</div>
<div class="t" style="right:558px;top:724.30px;font-size:15px;color:#ccccdc;-webkit-text-stroke:0.12px currentColor;">total_relation_size</div>
<div class="t" style="right:297px;top:724.30px;font-size:15px;color:#ccccdc;-webkit-text-stroke:0.12px currentColor;">last_vacuum</div>
<div class="t" style="right:35px;top:724.30px;font-size:15px;color:#ccccdc;-webkit-text-stroke:0.12px currentColor;">last_analyze</div>
<div class="a" style="left:325px;top:745px;width:1569px;height:1px;background:rgba(204,204,220,0.12)"></div>
<div class="a" style="left:325px;top:781px;width:1569px;height:1px;background:rgba(204,204,220,0.12)"></div>
<div class="a" style="left:325px;top:746px;width:261px;height:35px;overflow:hidden;display:flex;justify-content:flex-start;padding:0 6px 0 6px"><span class="t" style="position:relative;flex:none;top:11.30px;height:15px;font-size:15px;color:#ccccdc;letter-spacing:0.08px;">benchmark_bgbench_on_nextcloud</span></div>
<div class="a" style="left:586px;top:746px;width:1px;height:35px;background:rgba(204,204,220,0.12)"></div>
<div class="a" style="left:587px;top:746px;width:260px;height:35px;overflow:hidden;display:flex;justify-content:flex-start;padding:0 6px 0 6px"><span class="t" style="position:relative;flex:none;top:11.30px;height:15px;font-size:15px;color:#6e9fff;letter-spacing:0.31px;">public.pgbench_history</span></div>
<div class="a" style="left:847px;top:746px;width:1px;height:35px;background:rgba(204,204,220,0.12)"></div>
<div class="a" style="left:848px;top:746px;width:261px;height:35px;overflow:hidden;display:flex;justify-content:flex-end;padding:0 6px 0 6px"><span class="t" style="position:relative;flex:none;top:11.30px;height:15px;font-size:15px;color:#ccccdc;letter-spacing:-0.93px;margin-right:0.93px;">27.1 MiB</span></div>
<div class="a" style="left:1109px;top:746px;width:1px;height:35px;background:rgba(204,204,220,0.12)"></div>
<div class="a" style="left:1110px;top:746px;width:261px;height:35px;overflow:hidden;display:flex;justify-content:flex-end;padding:0 6px 0 6px"><span class="t" style="position:relative;flex:none;top:11.30px;height:15px;font-size:15px;color:#ccccdc;letter-spacing:-0.67px;margin-right:0.67px;">28.1 MiB</span></div>
<div class="a" style="left:1371px;top:746px;width:1px;height:35px;background:rgba(204,204,220,0.12)"></div>
<div class="a" style="left:1372px;top:746px;width:260px;height:35px;overflow:hidden;display:flex;justify-content:flex-end;padding:0 6px 0 6px"><span class="t" style="position:relative;flex:none;top:11.30px;height:15px;font-size:15px;color:#ccccdc;letter-spacing:0.156px;margin-right:-0.16px;">0 minutes, 46 seconds, 0 milliseconds</span></div>
<div class="a" style="left:1632px;top:746px;width:1px;height:35px;background:rgba(204,204,220,0.12)"></div>
<div class="a" style="left:1633px;top:746px;width:261px;height:35px;overflow:hidden;display:flex;justify-content:flex-end;padding:0 5px 0 6px"><span class="t" style="position:relative;flex:none;top:11.30px;height:15px;font-size:15px;color:#ccccdc;letter-spacing:0.156px;margin-right:-0.16px;">9 minutes, 46 seconds, 0 milliseconds</span></div>
<div class="a" style="left:325px;top:817px;width:1569px;height:1px;background:rgba(204,204,220,0.12)"></div>
<div class="a" style="left:325px;top:782px;width:261px;height:35px;overflow:hidden;display:flex;justify-content:flex-start;padding:0 6px 0 6px"><span class="t" style="position:relative;flex:none;top:11.30px;height:15px;font-size:15px;color:#ccccdc;letter-spacing:0.08px;">benchmark_bgbench_on_nextcloud</span></div>
<div class="a" style="left:586px;top:782px;width:1px;height:35px;background:rgba(204,204,220,0.12)"></div>
<div class="a" style="left:587px;top:782px;width:260px;height:35px;overflow:hidden;display:flex;justify-content:flex-start;padding:0 6px 0 6px"><span class="t" style="position:relative;flex:none;top:11.30px;height:15px;font-size:15px;color:#6e9fff;letter-spacing:0.27px;">public.pgbench_branches</span></div>
<div class="a" style="left:847px;top:782px;width:1px;height:35px;background:rgba(204,204,220,0.12)"></div>
<div class="a" style="left:848px;top:782px;width:261px;height:35px;overflow:hidden;display:flex;justify-content:flex-end;padding:0 6px 0 6px"><span class="t" style="position:relative;flex:none;top:11.30px;height:15px;font-size:15px;color:#ccccdc;letter-spacing:-0.33px;margin-right:0.33px;">0.0 B</span></div>
<div class="a" style="left:1109px;top:782px;width:1px;height:35px;background:rgba(204,204,220,0.12)"></div>
<div class="a" style="left:1110px;top:782px;width:261px;height:35px;overflow:hidden;display:flex;justify-content:flex-end;padding:0 6px 0 6px"><span class="t" style="position:relative;flex:none;top:11.30px;height:15px;font-size:15px;color:#ccccdc;">56.0 KiB</span></div>
<div class="a" style="left:1371px;top:782px;width:1px;height:35px;background:rgba(204,204,220,0.12)"></div>
<div class="a" style="left:1372px;top:782px;width:260px;height:35px;overflow:hidden;display:flex;justify-content:flex-end;padding:0 6px 0 6px"><span class="t" style="position:relative;flex:none;top:11.30px;height:15px;font-size:15px;color:#ccccdc;letter-spacing:0.156px;margin-right:-0.16px;">3 minutes, 46 seconds, 0 milliseconds</span></div>
<div class="a" style="left:1632px;top:782px;width:1px;height:35px;background:rgba(204,204,220,0.12)"></div>
<div class="a" style="left:1633px;top:782px;width:261px;height:35px;overflow:hidden;display:flex;justify-content:flex-end;padding:0 5px 0 6px"><span class="t" style="position:relative;flex:none;top:11.30px;height:15px;font-size:15px;color:#ccccdc;letter-spacing:0.156px;margin-right:-0.16px;">3 minutes, 46 seconds, 0 milliseconds</span></div>
<div class="a" style="left:325px;top:853px;width:1569px;height:1px;background:rgba(204,204,220,0.12)"></div>
<div class="a" style="left:325px;top:818px;width:261px;height:35px;overflow:hidden;display:flex;justify-content:flex-start;padding:0 6px 0 6px"><span class="t" style="position:relative;flex:none;top:11.30px;height:15px;font-size:15px;color:#ccccdc;letter-spacing:0.08px;">benchmark_bgbench_on_nextcloud</span></div>
<div class="a" style="left:586px;top:818px;width:1px;height:35px;background:rgba(204,204,220,0.12)"></div>
<div class="a" style="left:587px;top:818px;width:260px;height:35px;overflow:hidden;display:flex;justify-content:flex-start;padding:0 6px 0 6px"><span class="t" style="position:relative;flex:none;top:11.30px;height:15px;font-size:15px;color:#6e9fff;letter-spacing:0.27px;">public.pgbench_tellers</span></div>
<div class="a" style="left:847px;top:818px;width:1px;height:35px;background:rgba(204,204,220,0.12)"></div>
<div class="a" style="left:848px;top:818px;width:261px;height:35px;overflow:hidden;display:flex;justify-content:flex-end;padding:0 6px 0 6px"><span class="t" style="position:relative;flex:none;top:11.30px;height:15px;font-size:15px;color:#ccccdc;letter-spacing:-0.33px;margin-right:0.33px;">0.0 B</span></div>
<div class="a" style="left:1109px;top:818px;width:1px;height:35px;background:rgba(204,204,220,0.12)"></div>
<div class="a" style="left:1110px;top:818px;width:261px;height:35px;overflow:hidden;display:flex;justify-content:flex-end;padding:0 6px 0 6px"><span class="t" style="position:relative;flex:none;top:11.30px;height:15px;font-size:15px;color:#ccccdc;letter-spacing:-0.06px;margin-right:0.06px;">64.0 KiB</span></div>
<div class="a" style="left:1371px;top:818px;width:1px;height:35px;background:rgba(204,204,220,0.12)"></div>
<div class="a" style="left:1372px;top:818px;width:260px;height:35px;overflow:hidden;display:flex;justify-content:flex-end;padding:0 6px 0 6px"><span class="t" style="position:relative;flex:none;top:11.30px;height:15px;font-size:15px;color:#ccccdc;letter-spacing:0.156px;margin-right:-0.16px;">3 minutes, 46 seconds, 0 milliseconds</span></div>
<div class="a" style="left:1632px;top:818px;width:1px;height:35px;background:rgba(204,204,220,0.12)"></div>
<div class="a" style="left:1633px;top:818px;width:261px;height:35px;overflow:hidden;display:flex;justify-content:flex-end;padding:0 5px 0 6px"><span class="t" style="position:relative;flex:none;top:11.30px;height:15px;font-size:15px;color:#ccccdc;letter-spacing:0.156px;margin-right:-0.16px;">3 minutes, 46 seconds, 0 milliseconds</span></div>
<div class="a" style="left:325px;top:854px;width:261px;height:35px;overflow:hidden;display:flex;justify-content:flex-start;padding:0 6px 0 6px"><span class="t" style="position:relative;flex:none;top:11.30px;height:15px;font-size:15px;color:#ccccdc;letter-spacing:0.08px;">benchmark_bgbench_on_nextcloud</span></div>
<div class="a" style="left:586px;top:854px;width:1px;height:35px;background:rgba(204,204,220,0.12)"></div>
<div class="a" style="left:587px;top:854px;width:260px;height:35px;overflow:hidden;display:flex;justify-content:flex-start;padding:0 6px 0 6px"><span class="t" style="position:relative;flex:none;top:11.30px;height:15px;font-size:15px;color:#6e9fff;letter-spacing:0.3px;">public.pgbench_accounts</span></div>
<div class="a" style="left:847px;top:854px;width:1px;height:35px;background:rgba(204,204,220,0.12)"></div>
<div class="a" style="left:848px;top:854px;width:261px;height:35px;overflow:hidden;display:flex;justify-content:flex-end;padding:0 6px 0 6px"><span class="t" style="position:relative;flex:none;top:11.30px;height:15px;font-size:15px;color:#ccccdc;letter-spacing:-0.33px;margin-right:0.33px;">0.0 B</span></div>
<div class="a" style="left:1109px;top:854px;width:1px;height:35px;background:rgba(204,204,220,0.12)"></div>
<div class="a" style="left:1110px;top:854px;width:261px;height:35px;overflow:hidden;display:flex;justify-content:flex-end;padding:0 6px 0 6px"><span class="t" style="position:relative;flex:none;top:11.30px;height:15px;font-size:15px;color:#ccccdc;letter-spacing:-0.44px;margin-right:0.44px;">15.7 MiB</span></div>
<div class="a" style="left:1371px;top:854px;width:1px;height:35px;background:rgba(204,204,220,0.12)"></div>
<div class="a" style="left:1372px;top:854px;width:260px;height:35px;overflow:hidden;display:flex;justify-content:flex-end;padding:0 6px 0 6px"><span class="t" style="position:relative;flex:none;top:11.30px;height:15px;font-size:15px;color:#ccccdc;letter-spacing:-0.156px;margin-right:0.16px;">4 days, 1 hour, 12 minutes</span></div>
<div class="a" style="left:1632px;top:854px;width:1px;height:35px;background:rgba(204,204,220,0.12)"></div>
<div class="a" style="left:1633px;top:854px;width:261px;height:35px;overflow:hidden;display:flex;justify-content:flex-end;padding:0 5px 0 6px"><span class="t" style="position:relative;flex:none;top:11.30px;height:15px;font-size:15px;color:#ccccdc;letter-spacing:0.156px;margin-right:-0.16px;">3 minutes, 46 seconds, 0 milliseconds</span></div>
<div class="a" style="left:316px;top:942px;width:1588px;height:258px;background:#181b1f;border:1px solid rgba(204,204,220,0.12);border-radius:2px"></div>
<div class="t" style="left:325px;top:952.30px;font-size:15px;color:#ccccdc;letter-spacing:0.15px;-webkit-text-stroke:0.12px currentColor;">Most "seq. scans" (tables &gt; 100MB )</div>
<div class="t" style="left:316px;width:1588px;text-align:center;top:1078.84px;font-size:18.5px;letter-spacing:0.45px;text-indent:0.45px;color:rgba(204,204,220,0.65)">No data</div>
<div class="a" style="left:316px;top:1208px;width:1588px;height:258px;background:#181b1f;border:1px solid rgba(204,204,220,0.12);border-radius:2px"></div>
<div class="t" style="left:325px;top:1218.30px;font-size:15px;color:#ccccdc;letter-spacing:0.15px;-webkit-text-stroke:0.12px currentColor;">Most INSERT-s (aggregate over selected time period)</div>
<div class="t" style="left:331px;top:1256.30px;font-size:15px;color:#ccccdc;-webkit-text-stroke:0.12px currentColor;">dbname</div>
<div class="t" style="left:592px;top:1256.30px;font-size:15px;color:#ccccdc;-webkit-text-stroke:0.12px currentColor;">table_full_name</div>
<div class="t" style="right:820px;top:1256.30px;font-size:15px;color:#ccccdc;-webkit-text-stroke:0.12px currentColor;">ins</div>
<div class="t" style="right:558px;top:1256.30px;font-size:15px;color:#ccccdc;-webkit-text-stroke:0.12px currentColor;">total_relation_size</div>
<div class="t" style="right:297px;top:1256.30px;font-size:15px;color:#ccccdc;-webkit-text-stroke:0.12px currentColor;">last_vacuum</div>
<div class="t" style="right:35px;top:1256.30px;font-size:15px;color:#ccccdc;-webkit-text-stroke:0.12px currentColor;">last_analyze</div>
<div class="a" style="left:325px;top:1277px;width:1569px;height:1px;background:rgba(204,204,220,0.12)"></div>
<div class="a" style="left:325px;top:1278px;width:261px;height:35px;overflow:hidden;display:flex;justify-content:flex-start;padding:0 6px 0 6px"><span class="t" style="position:relative;flex:none;top:11.30px;height:15px;font-size:15px;color:#ccccdc;letter-spacing:0.08px;">benchmark_bgbench_on_nextcloud</span></div>
<div class="a" style="left:586px;top:1278px;width:1px;height:35px;background:rgba(204,204,220,0.12)"></div>
<div class="a" style="left:587px;top:1278px;width:260px;height:35px;overflow:hidden;display:flex;justify-content:flex-start;padding:0 6px 0 6px"><span class="t" style="position:relative;flex:none;top:11.30px;height:15px;font-size:15px;color:#6e9fff;letter-spacing:0.31px;">public.pgbench_history</span></div>
<div class="a" style="left:847px;top:1278px;width:1px;height:35px;background:rgba(204,204,220,0.12)"></div>
<div class="a" style="left:848px;top:1278px;width:261px;height:35px;overflow:hidden;display:flex;justify-content:flex-end;padding:0 6px 0 6px"><span class="t" style="position:relative;flex:none;top:11.30px;height:15px;font-size:15px;color:#ccccdc;letter-spacing:-0.65px;margin-right:0.65px;">3.1 Mil</span></div>
<div class="a" style="left:1109px;top:1278px;width:1px;height:35px;background:rgba(204,204,220,0.12)"></div>
<div class="a" style="left:1110px;top:1278px;width:261px;height:35px;overflow:hidden;display:flex;justify-content:flex-end;padding:0 6px 0 6px"><span class="t" style="position:relative;flex:none;top:11.30px;height:15px;font-size:15px;color:#ccccdc;letter-spacing:-0.11px;margin-right:0.11px;">25.0 MiB</span></div>
<div class="a" style="left:1371px;top:1278px;width:1px;height:35px;background:rgba(204,204,220,0.12)"></div>
<div class="a" style="left:1372px;top:1278px;width:260px;height:35px;overflow:hidden;display:flex;justify-content:flex-end;padding:0 6px 0 6px"><span class="t" style="position:relative;flex:none;top:11.30px;height:15px;font-size:15px;color:#ccccdc;letter-spacing:0.156px;margin-right:-0.16px;">0 minutes, 46 seconds, 0 milliseconds</span></div>
<div class="a" style="left:1632px;top:1278px;width:1px;height:35px;background:rgba(204,204,220,0.12)"></div>
<div class="a" style="left:1633px;top:1278px;width:261px;height:35px;overflow:hidden;display:flex;justify-content:flex-end;padding:0 5px 0 6px"><span class="t" style="position:relative;flex:none;top:11.30px;height:15px;font-size:15px;color:#ccccdc;letter-spacing:0.156px;margin-right:-0.16px;">9 minutes, 46 seconds, 0 milliseconds</span></div>
<div class="a" style="left:316px;top:1474px;width:1588px;height:258px;background:#181b1f;border:1px solid rgba(204,204,220,0.12);border-radius:2px"></div>
<div class="t" style="left:325px;top:1484.30px;font-size:15px;color:#ccccdc;letter-spacing:0.15px;-webkit-text-stroke:0.12px currentColor;">Most UPDATE-s (aggregate over selected time period)</div>
<div class="t" style="left:331px;top:1522.30px;font-size:15px;color:#ccccdc;-webkit-text-stroke:0.12px currentColor;">dbname</div>
<div class="t" style="left:592px;top:1522.30px;font-size:15px;color:#ccccdc;-webkit-text-stroke:0.12px currentColor;">table_full_name</div>
<div class="t" style="right:820px;top:1522.30px;font-size:15px;color:#ccccdc;-webkit-text-stroke:0.12px currentColor;">upd</div>
<div class="t" style="right:558px;top:1522.30px;font-size:15px;color:#ccccdc;-webkit-text-stroke:0.12px currentColor;">total_relation_size</div>
<div class="t" style="right:297px;top:1522.30px;font-size:15px;color:#ccccdc;-webkit-text-stroke:0.12px currentColor;">last_vacuum</div>
<div class="t" style="right:35px;top:1522.30px;font-size:15px;color:#ccccdc;-webkit-text-stroke:0.12px currentColor;">last_analyze</div>
<div class="a" style="left:325px;top:1543px;width:1569px;height:1px;background:rgba(204,204,220,0.12)"></div>
<div class="a" style="left:325px;top:1579px;width:1569px;height:1px;background:rgba(204,204,220,0.12)"></div>
<div class="a" style="left:325px;top:1544px;width:261px;height:35px;overflow:hidden;display:flex;justify-content:flex-start;padding:0 6px 0 6px"><span class="t" style="position:relative;flex:none;top:11.30px;height:15px;font-size:15px;color:#ccccdc;letter-spacing:0.08px;">benchmark_bgbench_on_nextcloud</span></div>
<div class="a" style="left:586px;top:1544px;width:1px;height:35px;background:rgba(204,204,220,0.12)"></div>
<div class="a" style="left:587px;top:1544px;width:260px;height:35px;overflow:hidden;display:flex;justify-content:flex-start;padding:0 6px 0 6px"><span class="t" style="position:relative;flex:none;top:11.30px;height:15px;font-size:15px;color:#6e9fff;letter-spacing:0.27px;">public.pgbench_branches</span></div>
<div class="a" style="left:847px;top:1544px;width:1px;height:35px;background:rgba(204,204,220,0.12)"></div>
<div class="a" style="left:848px;top:1544px;width:261px;height:35px;overflow:hidden;display:flex;justify-content:flex-end;padding:0 6px 0 6px"><span class="t" style="position:relative;flex:none;top:11.30px;height:15px;font-size:15px;color:#ccccdc;letter-spacing:-0.65px;margin-right:0.65px;">3.1 Mil</span></div>
<div class="a" style="left:1109px;top:1544px;width:1px;height:35px;background:rgba(204,204,220,0.12)"></div>
<div class="a" style="left:1110px;top:1544px;width:261px;height:35px;overflow:hidden;display:flex;justify-content:flex-end;padding:0 6px 0 6px"><span class="t" style="position:relative;flex:none;top:11.30px;height:15px;font-size:15px;color:#ccccdc;">56.0 KiB</span></div>
<div class="a" style="left:1371px;top:1544px;width:1px;height:35px;background:rgba(204,204,220,0.12)"></div>
<div class="a" style="left:1372px;top:1544px;width:260px;height:35px;overflow:hidden;display:flex;justify-content:flex-end;padding:0 6px 0 6px"><span class="t" style="position:relative;flex:none;top:11.30px;height:15px;font-size:15px;color:#ccccdc;letter-spacing:0.156px;margin-right:-0.16px;">3 minutes, 46 seconds, 0 milliseconds</span></div>
<div class="a" style="left:1632px;top:1544px;width:1px;height:35px;background:rgba(204,204,220,0.12)"></div>
<div class="a" style="left:1633px;top:1544px;width:261px;height:35px;overflow:hidden;display:flex;justify-content:flex-end;padding:0 5px 0 6px"><span class="t" style="position:relative;flex:none;top:11.30px;height:15px;font-size:15px;color:#ccccdc;letter-spacing:0.156px;margin-right:-0.16px;">3 minutes, 46 seconds, 0 milliseconds</span></div>
<div class="a" style="left:325px;top:1615px;width:1569px;height:1px;background:rgba(204,204,220,0.12)"></div>
<div class="a" style="left:325px;top:1580px;width:261px;height:35px;overflow:hidden;display:flex;justify-content:flex-start;padding:0 6px 0 6px"><span class="t" style="position:relative;flex:none;top:11.30px;height:15px;font-size:15px;color:#ccccdc;letter-spacing:0.08px;">benchmark_bgbench_on_nextcloud</span></div>
<div class="a" style="left:586px;top:1580px;width:1px;height:35px;background:rgba(204,204,220,0.12)"></div>
<div class="a" style="left:587px;top:1580px;width:260px;height:35px;overflow:hidden;display:flex;justify-content:flex-start;padding:0 6px 0 6px"><span class="t" style="position:relative;flex:none;top:11.30px;height:15px;font-size:15px;color:#6e9fff;letter-spacing:0.27px;">public.pgbench_tellers</span></div>
<div class="a" style="left:847px;top:1580px;width:1px;height:35px;background:rgba(204,204,220,0.12)"></div>
<div class="a" style="left:848px;top:1580px;width:261px;height:35px;overflow:hidden;display:flex;justify-content:flex-end;padding:0 6px 0 6px"><span class="t" style="position:relative;flex:none;top:11.30px;height:15px;font-size:15px;color:#ccccdc;letter-spacing:-0.65px;margin-right:0.65px;">3.1 Mil</span></div>
<div class="a" style="left:1109px;top:1580px;width:1px;height:35px;background:rgba(204,204,220,0.12)"></div>
<div class="a" style="left:1110px;top:1580px;width:261px;height:35px;overflow:hidden;display:flex;justify-content:flex-end;padding:0 6px 0 6px"><span class="t" style="position:relative;flex:none;top:11.30px;height:15px;font-size:15px;color:#ccccdc;letter-spacing:-0.06px;margin-right:0.06px;">64.0 KiB</span></div>
<div class="a" style="left:1371px;top:1580px;width:1px;height:35px;background:rgba(204,204,220,0.12)"></div>
<div class="a" style="left:1372px;top:1580px;width:260px;height:35px;overflow:hidden;display:flex;justify-content:flex-end;padding:0 6px 0 6px"><span class="t" style="position:relative;flex:none;top:11.30px;height:15px;font-size:15px;color:#ccccdc;letter-spacing:0.156px;margin-right:-0.16px;">3 minutes, 46 seconds, 0 milliseconds</span></div>
<div class="a" style="left:1632px;top:1580px;width:1px;height:35px;background:rgba(204,204,220,0.12)"></div>
<div class="a" style="left:1633px;top:1580px;width:261px;height:35px;overflow:hidden;display:flex;justify-content:flex-end;padding:0 5px 0 6px"><span class="t" style="position:relative;flex:none;top:11.30px;height:15px;font-size:15px;color:#ccccdc;letter-spacing:0.156px;margin-right:-0.16px;">3 minutes, 46 seconds, 0 milliseconds</span></div>
<div class="a" style="left:325px;top:1616px;width:261px;height:35px;overflow:hidden;display:flex;justify-content:flex-start;padding:0 6px 0 6px"><span class="t" style="position:relative;flex:none;top:11.30px;height:15px;font-size:15px;color:#ccccdc;letter-spacing:0.08px;">benchmark_bgbench_on_nextcloud</span></div>
<div class="a" style="left:586px;top:1616px;width:1px;height:35px;background:rgba(204,204,220,0.12)"></div>
<div class="a" style="left:587px;top:1616px;width:260px;height:35px;overflow:hidden;display:flex;justify-content:flex-start;padding:0 6px 0 6px"><span class="t" style="position:relative;flex:none;top:11.30px;height:15px;font-size:15px;color:#6e9fff;letter-spacing:0.3px;">public.pgbench_accounts</span></div>
<div class="a" style="left:847px;top:1616px;width:1px;height:35px;background:rgba(204,204,220,0.12)"></div>
<div class="a" style="left:848px;top:1616px;width:261px;height:35px;overflow:hidden;display:flex;justify-content:flex-end;padding:0 6px 0 6px"><span class="t" style="position:relative;flex:none;top:11.30px;height:15px;font-size:15px;color:#ccccdc;letter-spacing:-0.65px;margin-right:0.65px;">3.1 Mil</span></div>
<div class="a" style="left:1109px;top:1616px;width:1px;height:35px;background:rgba(204,204,220,0.12)"></div>
<div class="a" style="left:1110px;top:1616px;width:261px;height:35px;overflow:hidden;display:flex;justify-content:flex-end;padding:0 6px 0 6px"><span class="t" style="position:relative;flex:none;top:11.30px;height:15px;font-size:15px;color:#ccccdc;letter-spacing:-0.44px;margin-right:0.44px;">15.7 MiB</span></div>
<div class="a" style="left:1371px;top:1616px;width:1px;height:35px;background:rgba(204,204,220,0.12)"></div>
<div class="a" style="left:1372px;top:1616px;width:260px;height:35px;overflow:hidden;display:flex;justify-content:flex-end;padding:0 6px 0 6px"><span class="t" style="position:relative;flex:none;top:11.30px;height:15px;font-size:15px;color:#ccccdc;letter-spacing:-0.156px;margin-right:0.16px;">4 days, 1 hour, 12 minutes</span></div>
<div class="a" style="left:1632px;top:1616px;width:1px;height:35px;background:rgba(204,204,220,0.12)"></div>
<div class="a" style="left:1633px;top:1616px;width:261px;height:35px;overflow:hidden;display:flex;justify-content:flex-end;padding:0 5px 0 6px"><span class="t" style="position:relative;flex:none;top:11.30px;height:15px;font-size:15px;color:#ccccdc;letter-spacing:0.156px;margin-right:-0.16px;">3 minutes, 46 seconds, 0 milliseconds</span></div>
<div class="a" style="left:316px;top:1740px;width:1588px;height:20px;background:#181b1f;border:1px solid rgba(204,204,220,0.12);border-radius:2px"></div>
</body></html>
